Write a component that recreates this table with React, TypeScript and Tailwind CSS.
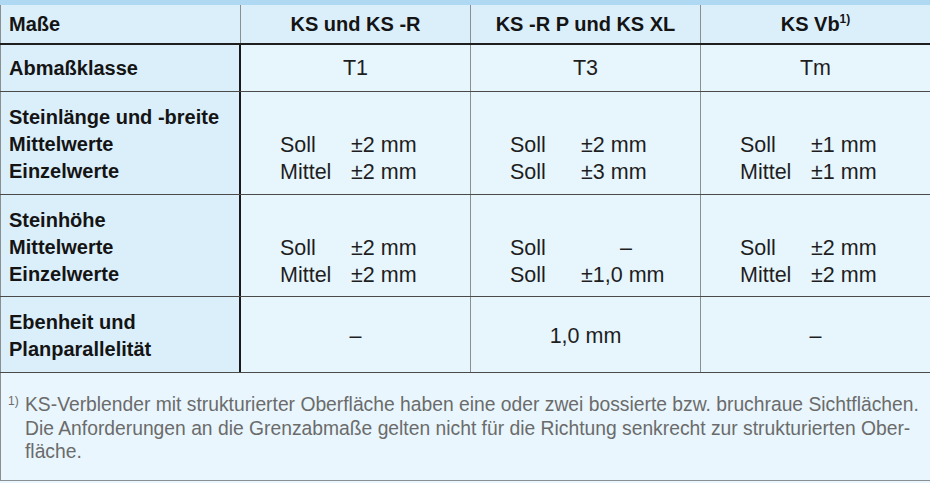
const font = "font-['Liberation_Sans',Arial,sans-serif]";

type Pair = [string, string];

function Values({pairs}: {pairs: Pair[]}) {
    return <div className="grid grid-cols-[71px_90px] pl-[39px] pt-[40px] leading-[27px] text-[21.5px] text-[#1e1e1e]">
        {pairs.map(([a, b], i) => <div key={i} className="contents">
            <span>{a}</span>
            <span className={b === "–" ? "text-center" : ""}>{b}</span>
        </div>)}
    </div>;
}

function Label({lines, className = ""}: {lines: string[]; className?: string}) {
    return <div className={`w-[241px] shrink-0 border-l border-r-2 border-l-[#8a8f92] border-r-[#1a1a1a] bg-[#dbeffb] pl-[8px] text-[20px] font-bold leading-[27px] text-[#141414] ${className}`}>
        {lines.map(l => <div key={l}>{l}</div>)}
    </div>;
}

export default function App() {
    return <div className={`w-[930px] h-[483px] overflow-hidden bg-[#e9f6fd] ${font}`}>
        <div className="h-[5px] bg-[#afd9f3]"/>

        {/* header */}
        <div className="flex h-[40px] border-b-2 border-[#1f1f1f] bg-[#dbeffb] text-[20px] font-bold text-[#141414]">
            <div className="flex w-[241px] shrink-0 items-center border-l border-r border-[#8a8f92] pl-[8px]">Maße</div>
            <div className="flex w-[230px] shrink-0 items-center justify-center border-r border-[#8a8f92]">KS und KS -R</div>
            <div className="flex w-[230px] shrink-0 items-center justify-center border-r border-[#8a8f92]">KS -R P und KS XL</div>
            <div className="flex flex-1 items-center justify-center">KS Vb<sup className="text-[12px] -top-[5px] font-bold">1)</sup></div>
        </div>

        {/* Abmaßklasse */}
        <div className="flex h-[47px] border-b border-[#4a4a4a] bg-[#e7f5fd]">
            <Label lines={["Abmaßklasse"]} className="flex flex-col justify-center pt-[1px]"/>
            {["T1", "T3", "Tm"].map((t, i) => <div key={t} className={`flex items-center justify-center pt-[1px] text-[21.5px] text-[#1e1e1e] ${i < 2 ? "w-[230px] shrink-0 border-r border-[#8a8f92]" : "flex-1"}`}>{t}</div>)}
        </div>

        {/* Steinlänge */}
        <div className="flex h-[103px] border-b border-[#4a4a4a] bg-[#e7f5fd]">
            <Label lines={["Steinlänge und -breite", "Mittelwerte", "Einzelwerte"]} className="pt-[12px]"/>
            <div className="w-[230px] shrink-0 border-r border-[#8a8f92]">
                <Values pairs={[["Soll", "±2 mm"], ["Mittel", "±2 mm"]]}/>
            </div>
            <div className="w-[230px] shrink-0 border-r border-[#8a8f92]">
                <Values pairs={[["Soll", "±2 mm"], ["Soll", "±3 mm"]]}/>
            </div>
            <div className="flex-1">
                <Values pairs={[["Soll", "±1 mm"], ["Mittel", "±1 mm"]]}/>
            </div>
        </div>

        {/* Steinhöhe */}
        <div className="flex h-[102px] border-b border-[#4a4a4a] bg-[#e7f5fd]">
            <Label lines={["Steinhöhe", "Mittelwerte", "Einzelwerte"]} className="pt-[12px]"/>
            <div className="w-[230px] shrink-0 border-r border-[#8a8f92]">
                <Values pairs={[["Soll", "±2 mm"], ["Mittel", "±2 mm"]]}/>
            </div>
            <div className="w-[230px] shrink-0 border-r border-[#8a8f92]">
                <Values pairs={[["Soll", "–"], ["Soll", "±1,0 mm"]]}/>
            </div>
            <div className="flex-1">
                <Values pairs={[["Soll", "±2 mm"], ["Mittel", "±2 mm"]]}/>
            </div>
        </div>

        {/* Ebenheit */}
        <div className="flex h-[76px] border-b border-[#4a4a4a] bg-[#e7f5fd]">
            <Label lines={["Ebenheit und", "Planparallelität"]} className="flex flex-col justify-center pt-[2px]"/>
            <div className="flex w-[230px] shrink-0 items-center justify-center border-r border-[#8a8f92] pt-[3px] text-[21.5px] text-[#1e1e1e]">–</div>
            <div className="flex w-[230px] shrink-0 items-center justify-center border-r border-[#8a8f92] pt-[3px] text-[21.5px] text-[#1e1e1e]">1,0 mm</div>
            <div className="flex flex-1 items-center justify-center pt-[3px] text-[21.5px] text-[#1e1e1e]">–</div>
        </div>

        {/* footnote */}
        <div className="flex h-[108px] border-b border-l border-[#8a8f92] bg-[#e9f6fd] pl-[7px] pt-[20px] text-[19.3px] leading-[23.5px] text-[#6b6b6b]">
            <span className="w-[17px] shrink-0 pt-[1px] text-[12px] leading-[14px]">1)</span>
            <div className="whitespace-nowrap">
                <div>KS-Verblender mit strukturierter Oberfläche haben eine oder zwei bossierte bzw. bruchraue Sichtflächen.</div>
                <div>Die Anforderungen an die Grenzabmaße gelten nicht für die Richtung senkrecht zur strukturierten Ober-</div>
                <div>fläche.</div>
            </div>
        </div>
    </div>;
}
